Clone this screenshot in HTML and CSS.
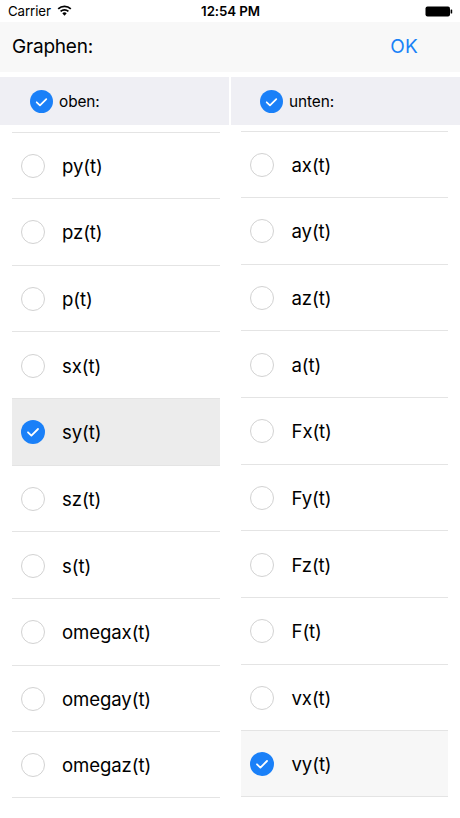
FILE: index.html
```html
<!DOCTYPE html>
<html>
<head>
<meta charset="utf-8">
<link rel="stylesheet" href="styles.css">
</head>
<body>
<div class="screen">
  <div class="status">
    <div class="status-left">
      <span>Carrier</span>
      <svg class="wifi" width="15" height="11" viewBox="0 0 15 11">
        <path d="M7.5 10.8 L5.3 8.3 A3.2 3.2 0 0 1 9.7 8.3 Z" fill="#000"/>
        <path d="M3.6 6.4 A5.6 5.6 0 0 1 11.4 6.4" fill="none" stroke="#000" stroke-width="1.7"/>
        <path d="M1.2 3.9 A9 9 0 0 1 13.8 3.9" fill="none" stroke="#000" stroke-width="1.7"/>
      </svg>
    </div>
    <div class="status-time">12:54 PM</div>
    <div class="status-right">
      <svg width="28" height="11" viewBox="0 0 28 11">
        <rect x="0.5" y="0.5" width="24.5" height="10" rx="2" fill="#000"/>
        <rect x="25.6" y="3.5" width="1.6" height="4" rx="0.6" fill="#000"/>
      </svg>
    </div>
  </div>

  <div class="navbar">
    <span class="nav-title">Graphen:</span>
    <span class="nav-ok">OK</span>
  </div>

  <div class="headers">
    <div class="head head-left">
      <span class="check on small"><svg viewBox="0 0 24 24"><path d="M7 12.3 L10.4 15.6 L17 9" fill="none" stroke="#fff" stroke-width="1.8" stroke-linecap="round" stroke-linejoin="round"/></svg></span>
      <span class="head-label">oben:</span>
    </div>
    <div class="head head-right">
      <span class="check on small"><svg viewBox="0 0 24 24"><path d="M7 12.3 L10.4 15.6 L17 9" fill="none" stroke="#fff" stroke-width="1.8" stroke-linecap="round" stroke-linejoin="round"/></svg></span>
      <span class="head-label">unten:</span>
    </div>
  </div>

  <div class="columns">
    <div class="col col-left">
      <div class="row"><span class="check"></span><span class="label">py(t)</span></div>
      <div class="row"><span class="check"></span><span class="label">pz(t)</span></div>
      <div class="row"><span class="check"></span><span class="label">p(t)</span></div>
      <div class="row"><span class="check"></span><span class="label">sx(t)</span></div>
      <div class="row selected"><span class="check on"><svg viewBox="0 0 24 24"><path d="M7 12.3 L10.4 15.6 L17 9" fill="none" stroke="#fff" stroke-width="1.8" stroke-linecap="round" stroke-linejoin="round"/></svg></span><span class="label">sy(t)</span></div>
      <div class="row"><span class="check"></span><span class="label">sz(t)</span></div>
      <div class="row"><span class="check"></span><span class="label">s(t)</span></div>
      <div class="row"><span class="check"></span><span class="label">omegax(t)</span></div>
      <div class="row"><span class="check"></span><span class="label">omegay(t)</span></div>
      <div class="row last"><span class="check"></span><span class="label">omegaz(t)</span></div>
    </div>
    <div class="col col-right">
      <div class="row"><span class="check"></span><span class="label">ax(t)</span></div>
      <div class="row"><span class="check"></span><span class="label">ay(t)</span></div>
      <div class="row"><span class="check"></span><span class="label">az(t)</span></div>
      <div class="row"><span class="check"></span><span class="label">a(t)</span></div>
      <div class="row"><span class="check"></span><span class="label">Fx(t)</span></div>
      <div class="row"><span class="check"></span><span class="label">Fy(t)</span></div>
      <div class="row"><span class="check"></span><span class="label">Fz(t)</span></div>
      <div class="row"><span class="check"></span><span class="label">F(t)</span></div>
      <div class="row"><span class="check"></span><span class="label">vx(t)</span></div>
      <div class="row last selected-light"><span class="check on"><svg viewBox="0 0 24 24"><path d="M7 12.3 L10.4 15.6 L17 9" fill="none" stroke="#fff" stroke-width="1.8" stroke-linecap="round" stroke-linejoin="round"/></svg></span><span class="label">vy(t)</span></div>
    </div>
  </div>
</div>
</body>
</html>
```

FILE: styles.css
```css
* { box-sizing: border-box; }

html, body {
  margin: 0;
  padding: 0;
  background: #fff;
}

body {
  font-family: Inter, "Noto Sans", "Liberation Sans", sans-serif;
  color: #000;
}

.screen {
  width: 460px;
  height: 818px;
  overflow: hidden;
  background: #fff;
}

/* status bar */
.status {
  height: 22px;
  display: grid;
  grid-template-columns: 1fr auto 1fr;
  align-items: center;
  padding: 0 7px 0 8px;
  font-size: 13.3px;
}

.status-left {
  display: flex;
  align-items: center;
  gap: 6px;
  letter-spacing: -0.1px;
}

.wifi { margin-top: -1px; }

.status-time {
  font-weight: 600;
  letter-spacing: -0.1px;
}

.status-right {
  display: flex;
  justify-content: flex-end;
  padding-top: 1px;
}

/* nav bar */
.navbar {
  height: 50px;
  background: #f8f8f8;
  display: flex;
  align-items: center;
  justify-content: space-between;
  padding: 0 42px 2px 12px;
  font-size: 19px;
}

.nav-title { letter-spacing: -0.2px; }

.nav-ok {
  color: #1a82f7;
  letter-spacing: 0.2px;
}

/* column headers */
.headers {
  margin-top: 5px;
  height: 48px;
  display: grid;
  grid-template-columns: 229px 229px;
  column-gap: 2px;
}

.head {
  background: #efeff4;
  display: flex;
  align-items: center;
  gap: 6px;
  padding-top: 1px;
}

.head-left { padding-left: 30px; }
.head-right { padding-left: 29px; }

.head-label {
  font-size: 15.4px;
  letter-spacing: -0.1px;
}

/* check circles */
.check {
  flex: none;
  width: 24px;
  height: 24px;
  border-radius: 50%;
  border: 1px solid #d2d2d2;
  display: flex;
  align-items: center;
  justify-content: center;
}

.check svg {
  width: 24px;
  height: 24px;
  display: block;
}

.check.on {
  background: #1a80f8;
  border: none;
}

.check.small {
  width: 23px;
  height: 23px;
}

/* columns */
.columns {
  display: grid;
  grid-template-columns: 208px 207px;
  column-gap: 21px;
  padding-left: 12px;
}

.col-left { padding-top: 6.5px; }
.col-right { padding-top: 5.5px; }

.row {
  height: 66.65px;
  border-top: 1px solid #e4e4e4;
  display: flex;
  align-items: center;
  padding-left: 8.5px;
  gap: 17.5px;
  padding-top: 1px;
}

.col-right .row {
  padding-left: 9px;
  gap: 17.5px;
}

.row.last {
  border-bottom: 1px solid #e4e4e4;
}

.row.selected { background: #ececec; }
.row.selected-light { background: #f7f7f7; }

.label {
  font-size: 18.6px;
  letter-spacing: -0.1px;
}
```
